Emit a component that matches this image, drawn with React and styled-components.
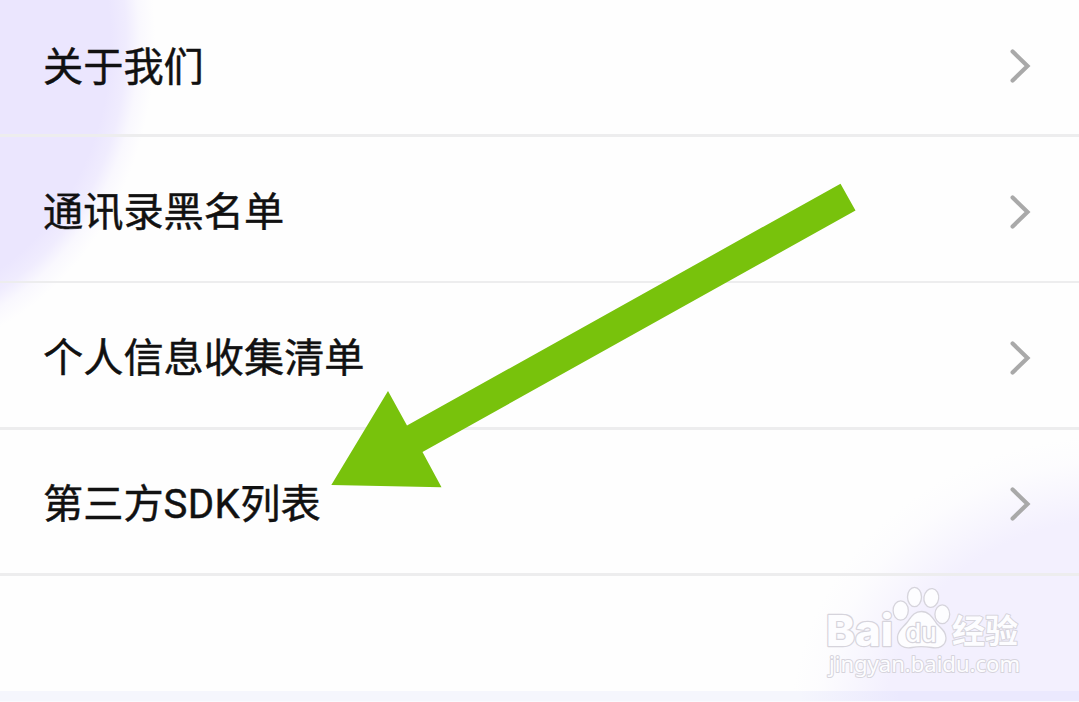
import styled, { createGlobalStyle } from 'styled-components';

const GlobalStyle = createGlobalStyle`
  * {
    box-sizing: border-box;
  }

  body {
    margin: 0;
    background: #fefefe;
    font-family: Roboto, 'Noto Sans CJK SC', sans-serif;
  }
`;

const Page = styled.main`
  position: relative;
  width: 100%;
  height: 702px;
  overflow: hidden;
  display: flex;
  flex-direction: column;
  background:
    radial-gradient(ellipse 262px 304px at -120px 40px, #ebe6fe 0 88%, rgba(235, 230, 254, 0.75) 94%, rgba(235, 230, 254, 0.25) 99%, rgba(235, 230, 254, 0) 105%),
    radial-gradient(ellipse 314px 280px at 1114px 724px, #f3f0fe 0 73%, rgba(243, 240, 254, 0.55) 84%, rgba(243, 240, 254, 0.15) 94%, rgba(243, 240, 254, 0) 103%),
    #fefefe;
`;

const SettingsList = styled.ul`
  list-style: none;
  margin: 0;
  padding: 0;
  flex: 1;
`;

const SettingsRow = styled.li`
  display: flex;
  align-items: center;
  justify-content: space-between;
  height: ${props => props.$height}px;
  padding: ${props => props.$top}px 48px 0 43px;
  border-bottom: ${props => props.$line}px solid #ededee;
`;

const RowLabel = styled.span`
  padding-top: 1px;
  font-size: 40.2px;
  line-height: 60px;
  color: #111;
  white-space: nowrap;
  -webkit-text-stroke: 0.45px #111;
`;

const LatinPart = styled.span`
  letter-spacing: 0.4px;
`;

const Chevron = styled.svg`
  display: block;
  width: 22px;
  height: 36px;
  fill: none;
  stroke: #a9a9a9;
  stroke-width: 4.2;
  stroke-linecap: round;
`;

const BottomStrip = styled.div`
  height: 11px;
  background: linear-gradient(90deg, #f5f6fd 0 800px, #ebe9fe 900px);
  border-bottom: 1px solid #fafafe;
`;

const Arrow = styled.svg`
  position: absolute;
  left: 331px;
  top: 183px;
  width: 526px;
  height: 305px;
  fill: #78c20c;
`;

const Watermark = styled.svg`
  position: absolute;
  left: 820px;
  top: 580px;
  width: 210px;
  height: 105px;
  fill: #fdfdff;
  stroke: #d6d4dc;
  stroke-width: 1.3;
`;

const BrandText = styled.text`
  font-family: ${props => props.$font}, sans-serif;
  font-size: ${props => props.$size}px;
  font-weight: ${props => props.$weight};
  paint-order: stroke;
  stroke-width: ${props => props.$stroke || 2.4};
  stroke-linejoin: round;
`;

const rows = [
  { label: '关于我们', height: 137, line: 3, top: 0 },
  { label: '通讯录黑名单', height: 146, line: 2, top: 7 },
  { label: '个人信息收集清单', height: 147, line: 3, top: 7 },
  { label: '第三方', latin: 'SDK', rest: '列表', height: 146, line: 3, top: 6 },
];

const App = () => {
  return (
    <Page>
      <GlobalStyle />
      <SettingsList>
        {rows.map((row) => (
          <SettingsRow key={row.label} $height={row.height} $line={row.line} $top={row.top}>
            <RowLabel>
              {row.label}
              {row.latin && <LatinPart>{row.latin}</LatinPart>}
              {row.rest}
            </RowLabel>
            <Chevron viewBox="0 0 22 36">
              <path d="M3.6 2.5 18.5 17 3.6 31.5" />
            </Chevron>
          </SettingsRow>
        ))}
      </SettingsList>
      <BottomStrip />

      <Arrow viewBox="0 0 526 305">
        <path d="M509.5.7 524.5 27.5 91.5 269 110.5 304.3.3 302 57 208 76 242.5Z" />
      </Arrow>

      <Watermark viewBox="0 0 210 105">
        <BrandText x="6" y="66" $size="43" $font="Inter" $weight="800" textLength="67" lengthAdjust="spacingAndGlyphs">Bai</BrandText>
        <ellipse cx="80.7" cy="30.5" rx="7.6" ry="9.6" />
        <ellipse cx="94.5" cy="17" rx="7" ry="9.6" />
        <ellipse cx="111.3" cy="18" rx="7.4" ry="9.4" transform="rotate(8 111.3 18)" />
        <ellipse cx="122.3" cy="34.2" rx="7.4" ry="9.4" />
        <path d="M101.5 31.5C110 31.5 113.5 39.5 117 44C121 48.5 126 51 126 58C126 66 118.5 69 111.5 67.5C105 66.5 97 66.5 92 67.5C84 69 77 65.5 77.5 57C78 50 83 47.5 87 42.5C91 37.5 93.5 31.5 101.5 31.5Z" />
        <BrandText x="85.5" y="61.5" $size="26" $font="Inter" $weight="500" $stroke="2.6" textLength="31" lengthAdjust="spacingAndGlyphs">du</BrandText>
        <BrandText x="132" y="63" $size="33" $font="'Noto Sans CJK SC'" $weight="700" $stroke="2">经验</BrandText>
        <BrandText x="9" y="92" $size="22.5" $font="'Noto Sans'" $weight="400" $stroke="2" textLength="191" lengthAdjust="spacingAndGlyphs">jingyan.baidu.com</BrandText>
      </Watermark>
    </Page>
  );
};

export default App;
